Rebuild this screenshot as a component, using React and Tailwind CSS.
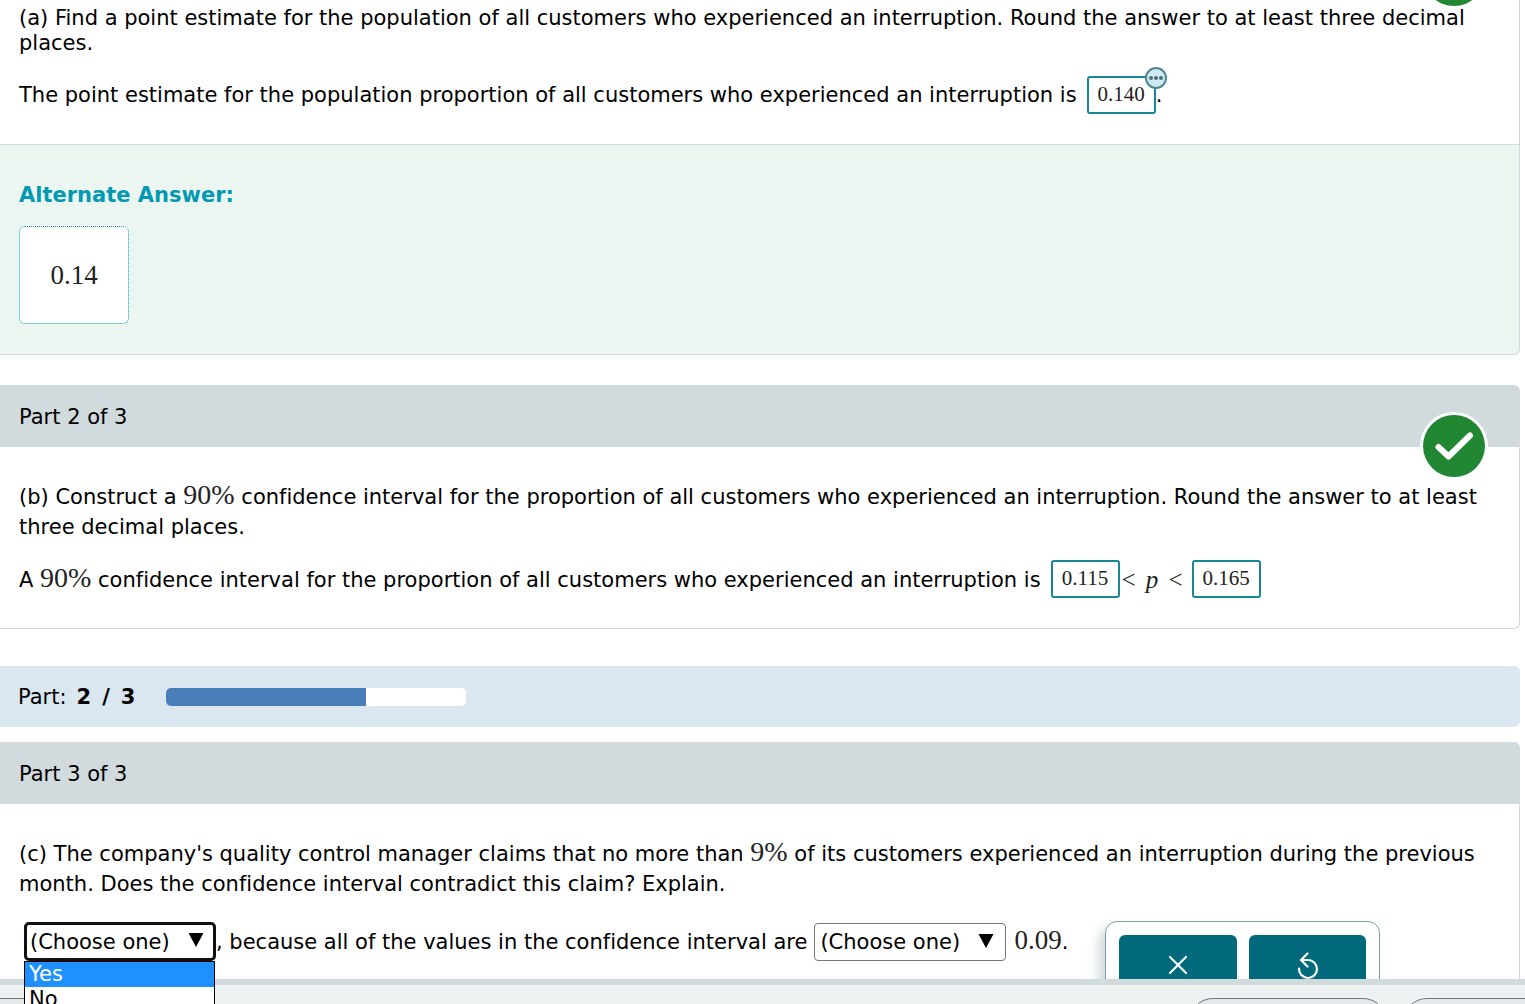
import React from "react";

function Num({ children, className = "text-[28px]" }) {
  return (
    <span className={`font-['Liberation_Serif',serif] leading-none text-[#222] ${className}`}>
      {children}
    </span>
  );
}

function AnswerBox({ value, label, badge }) {
  return (
    <span className="relative inline-flex">
      <input
        aria-label={label}
        defaultValue={value}
        className="h-[38px] w-[69px] rounded-[3px] border-2 border-[#1a8594] bg-white pb-[2px] text-center font-['Liberation_Serif',serif] text-[21px] text-[#222] outline-none"
      />
      {badge && (
        <button
          aria-label="More options"
          className="absolute -top-[9px] -right-[11px] flex size-[22px] items-center justify-center gap-px rounded-full border-2 border-[#4f8793] bg-[#cfeaf0]"
        >
          <span className="size-[4px] rounded-full bg-[#47727c]" />
          <span className="size-[4px] rounded-full bg-[#47727c]" />
          <span className="size-[4px] rounded-full bg-[#47727c]" />
        </button>
      )}
    </span>
  );
}

function Check({ className }) {
  return (
    <svg
      viewBox="0 0 68 68"
      role="img"
      aria-label="Correct"
      className={`absolute right-[32px] size-[68px] ${className}`}
    >
      <circle cx="34" cy="34" r="34" fill="#fff" />
      <circle cx="34" cy="34" r="31" fill="#228733" />
      <path
        d="M18.500 35L28.500 44.500L50 23.500"
        fill="none"
        stroke="#fff"
        strokeWidth="6"
        strokeLinecap="round"
        strokeLinejoin="round"
      />
    </svg>
  );
}

function PartHeader({ children }) {
  return (
    <h2 className="flex h-[62px] items-center rounded-tr-md bg-[#d1dadd] pt-[4px] pl-[19px]">
      {children}
    </h2>
  );
}

function Choice({ label, options, open }) {
  return (
    <span className="relative inline-flex">
      <select
        aria-label={label}
        className={
          open
            ? "h-[39px] w-[192px] appearance-none rounded-[5px] border-[3px] border-[#101010] bg-white pl-[3px] outline-none"
            : "h-[38px] w-[192px] appearance-none rounded-[4px] border border-[#767676] bg-white pl-[5px] outline-none"
        }
      >
        <option>(Choose one)</option>
        {options.map((o) => (
          <option key={o}>{o}</option>
        ))}
      </select>
      <svg
        viewBox="0 0 16 14"
        className="pointer-events-none absolute top-[11px] right-[12px] h-[14px] w-[16px]"
      >
        <path d="M0.500 0H15.500L8 14Z" fill="#000" />
      </svg>
      {open && (
        <ul className="absolute top-full left-0 z-20 w-[191px] border border-black bg-white leading-[25px]">
          {options.map((o, i) => (
            <li key={o} className={i === 0 ? "bg-[#1e90ff] pl-[4px] text-white" : "pl-[4px]"}>
              {o}
            </li>
          ))}
        </ul>
      )}
    </span>
  );
}

function ToolButton({ label, children }) {
  return (
    <button
      aria-label={label}
      className="flex h-[61px] flex-1 items-center justify-center rounded-[6px] bg-[#006a7c] text-white"
    >
      <svg
        viewBox="0 0 24 30"
        className="h-[30px] w-[24px]"
        fill="none"
        stroke="currentColor"
        strokeWidth="2.200"
        strokeLinecap="round"
      >
        {children}
      </svg>
    </button>
  );
}

export default function App() {
  return (
    <div className="flex h-screen flex-col overflow-hidden bg-white font-['DejaVu_Sans',sans-serif] text-[21px] text-black [font-variant-ligatures:none]">
      <main className="min-h-0 flex-1 pr-[5px]">
        <section className="relative">
          <Check className="-top-[59px]" />
          <div className="border-r border-b border-[#d1dadd] px-[19px] pt-[6px] pb-[30px] leading-[25px]">
            <p>
              (a) Find a point estimate for the population of all customers who experienced an
              interruption. Round the answer to at least three decimal places.
            </p>
            <div className="mt-5 flex items-center">
              <span>
                The point estimate for the population proportion of all customers who experienced
                an interruption is
              </span>
              <span className="ml-[10px]">
                <AnswerBox value="0.140" label="Point estimate" badge />
              </span>
              <span>.</span>
            </div>
          </div>
          <div className="rounded-br-md border-r border-b border-[#d1dadd] bg-[#ecf6f1] px-[19px] pt-[38px] pb-[30px]">
            <h3 className="leading-[25px] font-bold text-[#0399b2]">Alternate Answer:</h3>
            <div className="mt-[18px] flex h-[98px] w-[110px] items-center justify-center rounded-md border border-dotted border-[#0399b2] bg-white">
              <Num className="text-[27px]">0.14</Num>
            </div>
          </div>
        </section>

        <section className="relative mt-[30px]">
          <PartHeader>Part 2 of 3</PartHeader>
          <Check className="top-[27px]" />
          <div className="rounded-br-md border-r border-b border-[#d1dadd] px-[19px] pt-[34px] pb-[30px] leading-[30px]">
            <p>
              (b) Construct a <Num>90%</Num> confidence interval for the proportion of all
              customers who experienced an interruption. Round the answer to at least three
              decimal places.
            </p>
            <div className="mt-[18px] flex items-center">
              <span>
                A <Num>90%</Num> confidence interval for the proportion of all customers who
                experienced an interruption is
              </span>
              <span className="ml-[10px]">
                <AnswerBox value="0.115" label="Lower bound" />
              </span>
              <Num className="flex w-[72px] justify-between pr-[9px] pl-[2px] text-[25px]">
                <span>&lt;</span>
                <i>p</i>
                <span>&lt;</span>
              </Num>
              <AnswerBox value="0.165" label="Upper bound" />
            </div>
          </div>
        </section>

        <div className="mt-[37px] flex h-[61px] items-center rounded-r-md bg-[#dae6f0] pl-[18px]">
          <div className="flex gap-[10px] pt-[2px]">
            <span>Part:</span>
            <b className="flex gap-[11px]">
              <span>2</span>
              <span>/</span>
              <span>3</span>
            </b>
          </div>
          <div
            role="progressbar"
            aria-label="Parts completed"
            aria-valuenow={2}
            aria-valuemin={0}
            aria-valuemax={3}
            className="ml-[31px] h-[18px] w-[300px] overflow-hidden rounded-[5px] bg-white"
          >
            <div className="h-full w-2/3 bg-[#487db8]" />
          </div>
        </div>

        <section className="mt-[15px]">
          <PartHeader>Part 3 of 3</PartHeader>
          <div className="border-r border-[#d1dadd] px-[19px] pt-[34px] pb-10 leading-[30px]">
            <p>
              (c) The company's quality control manager claims that no more than <Num>9%</Num> of
              its customers experienced an interruption during the previous month. Does the
              confidence interval contradict this claim? Explain.
            </p>
            <div className="mt-[22px] flex items-start">
              <div className="flex items-center pt-px pl-[5px]">
                <Choice
                  label="Does the interval contradict the claim"
                  options={["Yes", "No"]}
                  open
                />
                <span>, because all of the values in the confidence interval are</span>
                <span className="ml-[7px]">
                  <Choice
                    label="Relation of the interval to 0.09"
                    options={["are greater than", "are less than"]}
                  />
                </span>
                <span className="ml-2">
                  <Num className="text-[27px]">0.09</Num>.
                </span>
              </div>
              <div className="ml-[37px] flex w-[275px] gap-3 rounded-xl border border-[#7d9ea8] bg-white p-[13px] shadow-[-6px_8px_12px_rgba(60,90,105,0.25)]">
                <ToolButton label="Clear">
                  <path d="M4 6L20 22M20 6L4 22" />
                </ToolButton>
                <ToolButton label="Reset">
                  <path d="M3 17.500A9 9 0 1 0 12 9H6M11.500 2.500L5 9L11.500 15.500" />
                </ToolButton>
              </div>
            </div>
          </div>
        </section>
      </main>

      <footer className="relative z-10 flex h-[25px] shrink-0 justify-between border-t-[6px] border-[#d1dadd] bg-[#edf1f2] pt-[13px]">
        <button
          aria-label="Skip part"
          className="-ml-8 h-[48px] w-[252px] rounded-full border border-[#68797e] bg-[#e6e9ea]"
        />
        <div className="-mr-[76px] flex gap-4">
          <button
            aria-label="Recheck"
            className="h-[48px] w-[198px] rounded-full border border-[#68797e] bg-[#e6e9ea]"
          />
          <button
            aria-label="Save for later"
            className="h-[48px] w-[198px] rounded-full border border-[#68797e] bg-[#e6e9ea]"
          />
        </div>
      </footer>
    </div>
  );
}
